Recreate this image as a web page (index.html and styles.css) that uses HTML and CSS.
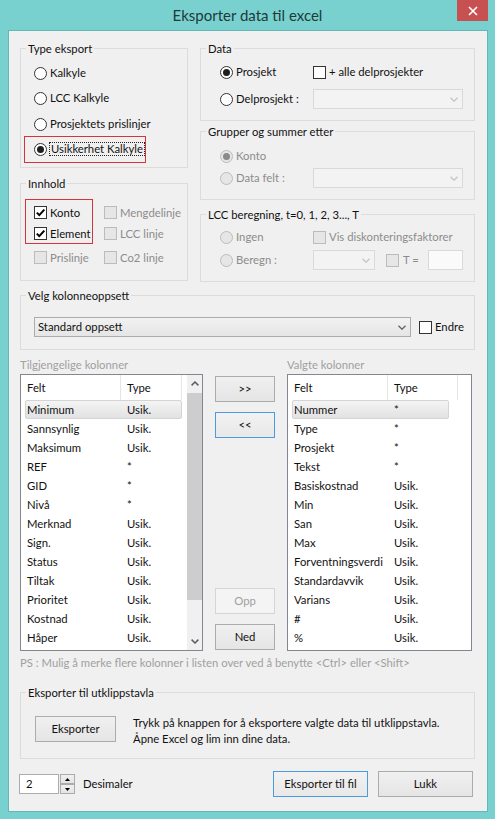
FILE: index.html
```html
<!DOCTYPE html>
<html lang="no">
<head>
<meta charset="utf-8">
<title>Eksporter data til excel</title>
<link rel="stylesheet" href="styles.css">
</head>
<body>
<div class="window">
  <div class="titlebar">
    <div class="title">Eksporter data til excel</div>
    <div class="close"><svg width="10" height="10" viewBox="0 0 10 10"><path d="M1 1L9 9M9 1L1 9" stroke="#fff" stroke-width="1.6"/></svg></div>
  </div>
  <div class="client">
    <div class="top">
      <div class="col-left">
        <div class="group g-type">
          <div class="legend">Type eksport</div>
          <div class="type-list">
            <label class="opt ind mt8"><span class="radio"></span>Kalkyle</label>
            <label class="opt ind mt7"><span class="radio"></span>LCC Kalkyle</label>
            <label class="opt ind mt8"><span class="radio"></span>Prosjektets prislinjer</label>
            <div class="redbox type-red">
              <label class="opt"><span class="radio on"></span><span class="focus">Usikkerhet Kalkyle</span></label>
            </div>
          </div>
        </div>
        <div class="group g-innhold">
          <div class="legend">Innhold</div>
          <div class="innhold">
            <div class="inn-left">
              <div class="redbox inn-red">
                <label class="opt sm"><span class="check"><svg width="11" height="11" viewBox="0 0 11 11"><path d="M1.8 5.6L4.3 8.1L9.3 2.6" fill="none" stroke="#000" stroke-width="2"/></svg></span>Konto</label>
                <label class="opt sm mt8"><span class="check"><svg width="11" height="11" viewBox="0 0 11 11"><path d="M1.8 5.6L4.3 8.1L9.3 2.6" fill="none" stroke="#000" stroke-width="2"/></svg></span>Element</label>
              </div>
              <label class="opt sm dis mt7 ind9"><span class="check"></span>Prislinje</label>
            </div>
            <div class="inn-right">
              <label class="opt sm dis"><span class="check"></span>Mengdelinje</label>
              <label class="opt sm dis mt8"><span class="check"></span>LCC linje</label>
              <label class="opt sm dis mt11"><span class="check"></span>Co2 linje</label>
            </div>
          </div>
        </div>
      </div>
      <div class="col-right">
        <div class="group g-data">
          <div class="legend">Data</div>
          <div class="form-grid">
            <label class="opt"><span class="radio on"></span>Prosjekt</label>
            <label class="opt"><span class="check"></span>+ alle delprosjekter</label>
            <label class="opt"><span class="radio"></span>Delprosjekt :</label>
            <div class="combo dis"><span></span><svg width="8" height="5" viewBox="0 0 8 5"><path d="M0.5 0.8L4 4.2L7.5 0.8" fill="none" stroke="#c4c4c4" stroke-width="1.3"/></svg></div>
          </div>
        </div>
        <div class="group g-grupper">
          <div class="legend">Grupper og summer etter</div>
          <div class="form-grid">
            <label class="opt dis"><span class="radio on"></span>Konto</label>
            <span></span>
            <label class="opt dis"><span class="radio"></span>Data felt :</label>
            <div class="combo dis"><span></span><svg width="8" height="5" viewBox="0 0 8 5"><path d="M0.5 0.8L4 4.2L7.5 0.8" fill="none" stroke="#c4c4c4" stroke-width="1.3"/></svg></div>
          </div>
        </div>
        <div class="group g-lcc">
          <div class="legend">LCC beregning, t=0, 1, 2, 3..., T</div>
          <div class="form-grid">
            <label class="opt dis"><span class="radio"></span>Ingen</label>
            <label class="opt dis"><span class="check"></span>Vis diskonteringsfaktorer</label>
            <label class="opt dis"><span class="radio"></span>Beregn :</label>
            <div class="beregn dis">
              <div class="combo dis small"><span></span><svg width="8" height="5" viewBox="0 0 8 5"><path d="M0.5 0.8L4 4.2L7.5 0.8" fill="none" stroke="#c4c4c4" stroke-width="1.3"/></svg></div>
              <span class="check t-check"></span>
              <span class="t-label">T =</span>
              <span class="tinput"></span>
            </div>
          </div>
        </div>
      </div>
    </div>

    <div class="group g-velg">
      <div class="legend">Velg kolonneoppsett</div>
      <div class="velg-row">
        <div class="combo std"><span>Standard oppsett</span><svg width="8" height="5" viewBox="0 0 8 5"><path d="M0.5 0.8L4 4.2L7.5 0.8" fill="none" stroke="#606060" stroke-width="1.3"/></svg></div>
        <label class="opt"><span class="check"></span>Endre</label>
      </div>
    </div>

    <div class="lists">
      <div class="list-col">
        <div class="list-label">Tilgjengelige kolonner</div>
        <div class="list l-left">
          <div class="list-main">
            <div class="head"><div class="hc hc-felt">Felt</div><div class="hc hc-type">Type</div></div>
            <div class="rows">
              <div class="row sel"><span>Minimum</span><span>Usik.</span></div>
              <div class="row"><span>Sannsynlig</span><span>Usik.</span></div>
              <div class="row"><span>Maksimum</span><span>Usik.</span></div>
              <div class="row"><span>REF</span><span>*</span></div>
              <div class="row"><span>GID</span><span>*</span></div>
              <div class="row"><span>Nivå</span><span>*</span></div>
              <div class="row"><span>Merknad</span><span>Usik.</span></div>
              <div class="row"><span>Sign.</span><span>Usik.</span></div>
              <div class="row"><span>Status</span><span>Usik.</span></div>
              <div class="row"><span>Tiltak</span><span>Usik.</span></div>
              <div class="row"><span>Prioritet</span><span>Usik.</span></div>
              <div class="row"><span>Kostnad</span><span>Usik.</span></div>
              <div class="row"><span>Håper</span><span>Usik.</span></div>
            </div>
          </div>
          <div class="scrollbar">
            <div class="sb-btn"><svg width="8" height="5" viewBox="0 0 8 5"><path d="M0.6 4.4L4 1L7.4 4.4" fill="none" stroke="#5f5f5f" stroke-width="1.5"/></svg></div>
            <div class="sb-thumb"></div>
            <div class="sb-track"></div>
            <div class="sb-btn"><svg width="8" height="5" viewBox="0 0 8 5"><path d="M0.6 0.6L4 4L7.4 0.6" fill="none" stroke="#5f5f5f" stroke-width="1.5"/></svg></div>
          </div>
        </div>
      </div>
      <div class="btn-col">
        <div class="btn">&gt;&gt;</div>
        <div class="btn focus-btn mt10">&lt;&lt;</div>
        <div class="btn disabled mt-auto">Opp</div>
        <div class="btn mt10">Ned</div>
      </div>
      <div class="list-col">
        <div class="list-label">Valgte kolonner</div>
        <div class="list l-right">
          <div class="list-main">
            <div class="head"><div class="hc hc-felt">Felt</div><div class="hc hc-type">Type</div></div>
            <div class="rows">
              <div class="row sel"><span>Nummer</span><span>*</span></div>
              <div class="row"><span>Type</span><span>*</span></div>
              <div class="row"><span>Prosjekt</span><span>*</span></div>
              <div class="row"><span>Tekst</span><span>*</span></div>
              <div class="row"><span>Basiskostnad</span><span>Usik.</span></div>
              <div class="row"><span>Min</span><span>Usik.</span></div>
              <div class="row"><span>San</span><span>Usik.</span></div>
              <div class="row"><span>Max</span><span>Usik.</span></div>
              <div class="row"><span>Forventningsverdi</span><span>Usik.</span></div>
              <div class="row"><span>Standardavvik</span><span>Usik.</span></div>
              <div class="row"><span>Varians</span><span>Usik.</span></div>
              <div class="row"><span>#</span><span>Usik.</span></div>
              <div class="row"><span>%</span><span>Usik.</span></div>
            </div>
          </div>
        </div>
      </div>
    </div>

    <p class="ps">PS : Mulig å merke flere kolonner i listen over ved å benytte &lt;Ctrl&gt; eller &lt;Shift&gt;</p>

    <div class="group g-utklipp">
      <div class="legend">Eksporter til utklippstavla</div>
      <div class="utk-row">
        <div class="btn">Eksporter</div>
        <div class="utk-text">Trykk på knappen for å eksportere valgte data til utklippstavla.<br>Åpne Excel og lim inn dine data.</div>
      </div>
    </div>

    <div class="bottom">
      <div class="spin-input">2</div>
      <div class="spin">
        <div class="spin-btn"><svg width="5" height="3" viewBox="0 0 5 3"><path d="M0 3L2.5 0L5 3Z" fill="#000"/></svg></div>
        <div class="spin-btn"><svg width="5" height="3" viewBox="0 0 5 3"><path d="M0 0L2.5 3L5 0Z" fill="#000"/></svg></div>
      </div>
      <span class="desim">Desimaler</span>
      <div class="btn focus-btn first">Eksporter til fil</div>
      <div class="btn">Lukk</div>
    </div>
  </div>
</div>
</body>
</html>
```

FILE: styles.css
```css
* { box-sizing: border-box; margin: 0; padding: 0; }
html, body { width: 495px; height: 819px; overflow: hidden; }
body {
  background: #79d1cf;
  font-family: Lato, "Noto Sans", "DejaVu Sans", sans-serif;
  font-size: 11.3px;
  color: #111;
  line-height: 1.2;
}
.window { width: 495px; height: 819px; background: #79d1cf; }

.titlebar {
  height: 30px;
  display: grid;
  grid-template-columns: 1fr auto 1fr;
  align-items: start;
}
.title { grid-column: 2; font-size: 15px; line-height: 31px; color: #1d3a3b; }
.close {
  grid-column: 3;
  justify-self: end;
  width: 31px;
  height: 21px;
  margin-right: 7px;
  background: #c75050;
  display: flex;
  align-items: center;
  justify-content: center;
}

.client {
  margin-left: 8px;
  width: 480px;
  height: 782px;
  background: #f0f0f0;
  border: 1px solid #63b7b5;
  padding: 17px 12px 0 11px;
}

/* generic */
.mt7 { margin-top: 7px; }
.mt8 { margin-top: 8px; }
.mt10 { margin-top: 10px; }
.mt11 { margin-top: 11px; }
.mt-auto { margin-top: auto; }

.group { border: 1px solid #dcdcdc; }
.legend {
  width: max-content;
  height: 15px;
  line-height: 15px;
  margin: -8px 0 0 5px;
  padding: 0 2px;
  background: #f0f0f0;
  white-space: nowrap;
}

.opt { display: flex; align-items: center; height: 18px; white-space: nowrap; }
.opt.sm { height: 13px; }
.dis { color: #8c8c8c; }

.radio, .check {
  width: 13px;
  height: 13px;
  flex: none;
  margin-right: 3px;
  border: 1px solid #333;
  background: #fff;
  display: flex;
  align-items: center;
  justify-content: center;
}
.radio { border-radius: 50%; }
.radio.on::after {
  content: "";
  width: 7px;
  height: 7px;
  border-radius: 50%;
  background: #1e1e1e;
}
.dis .radio, .dis .check { border-color: #bcbcbc; background: #e6e6e6; }
.dis .radio.on::after { background: #8a8a8a; }

.redbox { border: 1px solid #d4353d; }
.focus { outline: 1px dotted #222; line-height: 12px; padding: 0 1px; }

.combo {
  height: 20px;
  border: 1px solid #acacac;
  background: linear-gradient(#f2f2f2, #e5e5e5);
  display: flex;
  align-items: center;
  justify-content: space-between;
  padding: 0 4px 0 3px;
  white-space: nowrap;
}
.combo.dis { border-color: #d9d9d9; background: #f3f3f3; }

.btn {
  height: 26px;
  border: 1px solid #acacac;
  background: linear-gradient(#f0f0f0, #e5e5e5);
  display: flex;
  align-items: center;
  justify-content: center;
  white-space: nowrap;
}
.btn.focus-btn { border-color: #4c9be0; background: linear-gradient(#f2f2f2, #e8e8e8); }
.btn.disabled { border-color: #d5d5d5; background: #f4f4f4; color: #a0a0a0; }

/* top area */
.top { display: flex; gap: 12px; align-items: flex-start; }
.col-left { width: 168px; }
.col-right { width: 275px; }

.g-type { height: 120px; }
.type-list { padding-left: 3px; }
.ind { margin-left: 10px; }
.ind9 { margin-left: 9px; }
.type-red { width: 122px; margin-top: 3px; padding: 3px 0 4px 9px; }

.g-innhold { margin-top: 15px; height: 98px; }
.innhold { display: flex; margin-top: 8px; padding-left: 4px; }
.inn-red { width: 68px; padding: 6px 0 3px 8px; }
.inn-right { margin-left: 11px; padding-top: 7px; }

.form-grid {
  display: grid;
  grid-template-columns: 93px 150px;
  padding-left: 19px;
  align-items: center;
}
.g-data { height: 73px; }
.g-data .form-grid { margin-top: 7px; row-gap: 8px; }
.g-grupper { margin-top: 10px; height: 69px; }
.g-grupper .form-grid { margin-top: 8px; row-gap: 3px; }
.g-lcc { margin-top: 14px; height: 68px; }
.g-lcc .form-grid { margin-top: 6px; row-gap: 4px; }

.beregn { display: flex; align-items: center; height: 20px; }
.combo.small { width: 62px; }
.t-check { margin-left: 11px; }
.t-label { margin-left: 1px; white-space: nowrap; }
.tinput {
  width: 35px;
  height: 20px;
  margin-left: auto;
  border: 1px solid #d9d9d9;
  background: #fafafa;
}

/* kolonneoppsett */
.g-velg { margin-top: 13px; height: 55px; }
.velg-row { display: flex; align-items: center; margin-top: 14px; padding-left: 13px; }
.velg-row .combo { width: 377px; }
.velg-row .opt { margin-left: 8px; }

/* lists */
.lists {
  display: grid;
  grid-template-columns: 183px 60px 185px;
  column-gap: 12px;
  margin-top: 8px;
}
.list-label { height: 16px; line-height: 14px; color: #a0a0a0; white-space: nowrap; }
.list { height: 277px; border: 1px solid #828790; background: #fff; display: flex; }
.list-main { flex: 1; min-width: 0; }
.head { display: flex; height: 25px; }
.hc { line-height: 25px; padding-left: 6px; border-right: 1px solid #e5e5e5; }
.hc-felt { width: 100px; }
.l-left .hc-type { width: 61px; }
.l-right .hc-type { width: 70px; }
.rows { padding-left: 4px; }
.row {
  display: grid;
  grid-template-columns: 100px 1fr;
  align-items: center;
  width: 157px;
  height: 19px;
  padding-left: 1px;
  border: 1px solid transparent;
  white-space: nowrap;
}
.row.sel {
  background: linear-gradient(#f4f4f4, #e2e2e2);
  border-color: #d4d4d4;
  border-radius: 2px;
}
.scrollbar { width: 15px; background: #f0f0f0; display: flex; flex-direction: column; }
.sb-btn { height: 17px; display: flex; align-items: center; justify-content: center; }
.sb-thumb { height: 207px; margin-top: 1px; background: #cdcdcd; }
.sb-track { flex: 1; }

.btn-col { display: flex; flex-direction: column; padding-top: 18px; padding-bottom: 1px; }

.ps { margin-top: 4px; line-height: 15px; color: #a0a0a0; white-space: nowrap; }

/* utklippstavla */
.g-utklipp { margin-top: 22px; height: 67px; }
.utk-row { display: flex; align-items: flex-start; margin-top: 15px; padding-left: 14px; }
.utk-row .btn { width: 81px; margin-top: 1px; flex: none; }
.utk-text { margin-left: 17px; line-height: 16px; white-space: nowrap; }

/* bottom */
.bottom { display: flex; align-items: center; height: 26px; margin-top: 12px; padding-right: 2px; }
.spin-input {
  width: 40px;
  height: 20px;
  margin-left: -1px;
  border: 1px solid #acacac;
  background: #fff;
  padding-left: 6px;
  line-height: 18px;
}
.spin { width: 15px; height: 20px; margin-left: 1px; display: flex; flex-direction: column; }
.spin-btn {
  height: 10px;
  border: 1px solid #acacac;
  background: linear-gradient(#f0f0f0, #e5e5e5);
  display: flex;
  align-items: center;
  justify-content: center;
}
.desim { margin-left: 8px; }
.bottom .btn { width: 95px; }
.bottom .btn.first { margin-left: auto; }
.bottom .btn + .btn { margin-left: 10px; }
```
